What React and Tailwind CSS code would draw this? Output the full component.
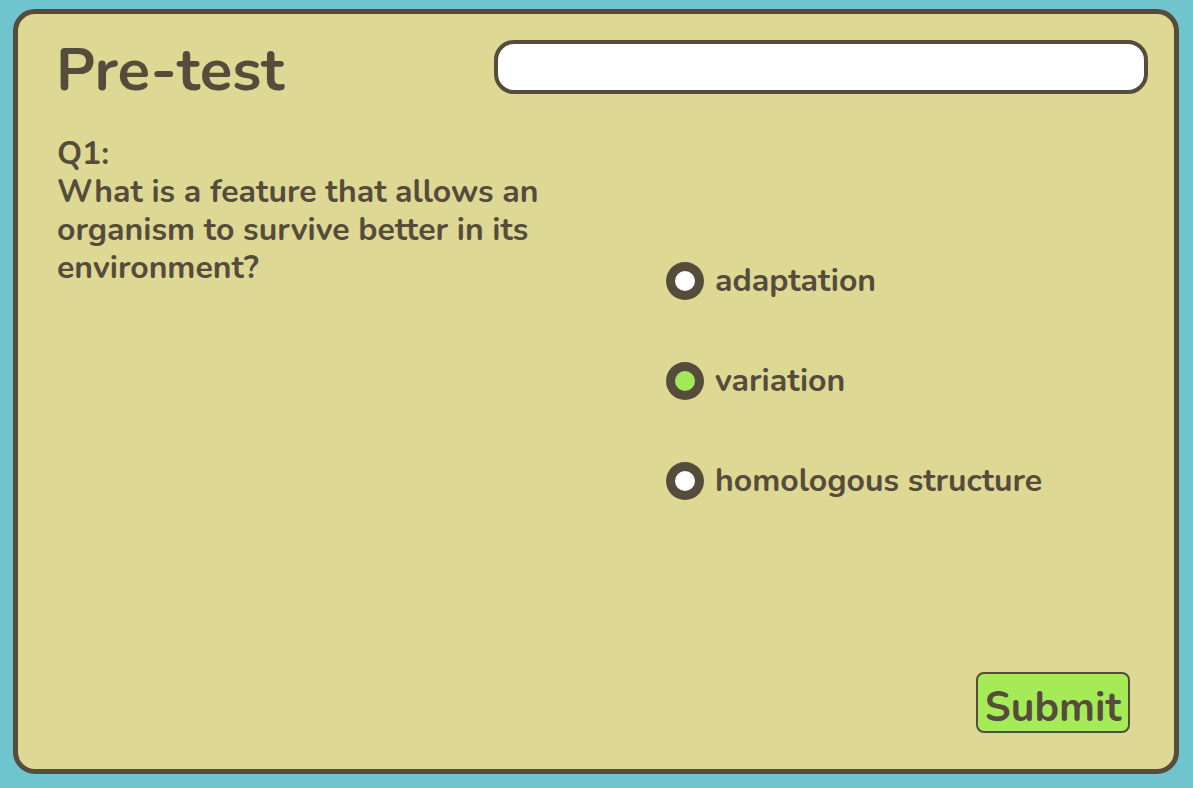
import React, { useState } from 'react';

const options = ['adaptation', 'variation', 'homologous structure'];

export default function App() {
  const [picked, setPicked] = useState('variation');

  return (
    <div
      className="w-[1193px] h-[788px] bg-[#6fc4ce] pt-[9px] pl-[13px]"
      style={{ fontFamily: 'Nunito, Lato, "Open Sans", sans-serif' }}
    >
      <div className="w-[1166px] h-[765px] bg-[#ddd894] border-[5px] border-[#564c3c] rounded-[22px] flex flex-col text-[#564c3c]">
        {/* Header */}
        <div className="flex items-start pt-[26px] pl-[38px] pr-[26px]">
          <h1 className="text-[60px] font-bold leading-none">Pre-test</h1>
          <div className="ml-auto w-[654px] h-[54px] bg-white border-[4px] border-[#564c3c] rounded-[20px]"></div>
        </div>

        {/* Body */}
        <div className="flex flex-1 pl-[39px] pt-[35px]">
          <p className="w-[510px] text-[32px] font-bold leading-[38px]">
            Q1:
            <br />
            What is a feature that allows an organism to survive better in its environment?
          </p>
          <div className="ml-[99px] pt-[127px] flex flex-col gap-[62px]">
            {options.map(opt => (
              <button
                key={opt}
                onClick={() => setPicked(opt)}
                className="flex items-center gap-[11px] text-[32px] font-bold leading-[38px]"
              >
                <span className="w-[38px] h-[38px] rounded-full bg-[#564c3c] flex items-center justify-center">
                  <span className={`w-[20px] h-[20px] rounded-full ${picked === opt ? 'bg-[#a3e858]' : 'bg-white'}`}></span>
                </span>
                {opt}
              </button>
            ))}
          </div>
        </div>

        {/* Footer */}
        <div className="flex justify-end pr-[44px] pb-[36px]">
          <button className="w-[154px] h-[61px] bg-[#a5eb58] border-2 border-[#564c3c] rounded-[8px] text-[41px] font-bold leading-none pt-[13px] flex justify-center items-start">
            Submit
          </button>
        </div>
      </div>
    </div>
  );
}
